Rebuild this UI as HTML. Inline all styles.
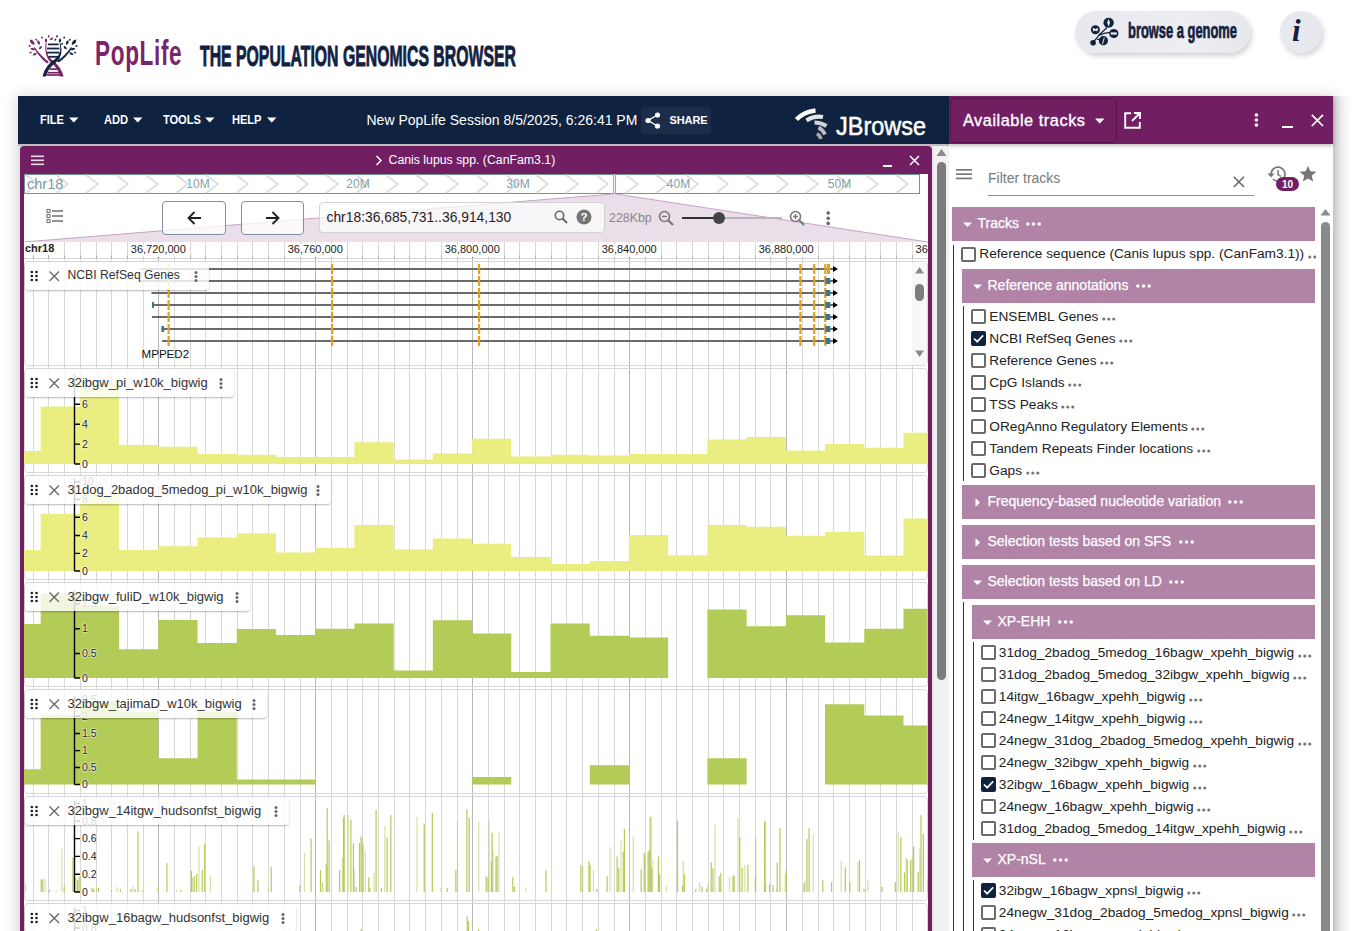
<!DOCTYPE html>
<html><head><meta charset="utf-8"><title>PopLife</title><style>
*{box-sizing:border-box;margin:0;padding:0}
html,body{width:1352px;height:931px;overflow:hidden;background:#fff;font-family:"Liberation Sans",sans-serif;color:#222}
.a{position:absolute}
.t{position:absolute;white-space:nowrap;line-height:1}
svg{position:absolute;overflow:visible}
</style></head>
<body>
<svg class="a" style="left:0;top:0" width="100" height="90" viewBox="0 0 100 90">
<g fill="#762466"><path d="M-3.5 0 Q0 -3.2 3.5 0 Q0 3.2 -3.5 0Z" transform="translate(32.2 42.3) rotate(50)"/><path d="M-2.5 0 Q0 -2.6 2.5 0 Q0 2.6 -2.5 0Z" transform="translate(38.6 42.6) rotate(70)"/><path d="M-2.25 0 Q0 -2.4 2.25 0 Q0 2.4 -2.25 0Z" transform="translate(46 40.5) rotate(85)"/><path d="M-2.25 0 Q0 -2.2 2.25 0 Q0 2.2 -2.25 0Z" transform="translate(51.6 38.8) rotate(-35)"/><path d="M-2.5 0 Q0 -2.4 2.5 0 Q0 2.4 -2.5 0Z" transform="translate(32.7 49) rotate(15)"/><path d="M-2.5 0 Q0 -2.4 2.5 0 Q0 2.4 -2.5 0Z" transform="translate(34.8 54.2) rotate(-30)"/><path d="M-2.25 0 Q0 -2.2 2.25 0 Q0 2.2 -2.25 0Z" transform="translate(40.4 47.8) rotate(-50)"/><path d="M-1.3 0 Q0 -1.8 1.3 0 Q0 1.8 -1.3 0Z" transform="translate(42 37.7) rotate(60)"/><path d="M-1.3 0 Q0 -1.8 1.3 0 Q0 1.8 -1.3 0Z" transform="translate(48.7 36.4) rotate(80)"/><path d="M-1.3 0 Q0 -1.8 1.3 0 Q0 1.8 -1.3 0Z" transform="translate(36.3 39.7) rotate(40)"/><path d="M-1.4 0 Q0 -1.8 1.4 0 Q0 1.8 -1.4 0Z" transform="translate(30.6 52.6) rotate(-20)"/><path d="M-1.4 0 Q0 -1.8 1.4 0 Q0 1.8 -1.4 0Z" transform="translate(29.6 45.9) rotate(20)"/>
<path d="M34.5 47 Q41 56 49 62 L47 63.5 Q39 57 34 48Z"/>
<path d="M46.5 43 Q45 55 52 60 Q61 66 63.5 76.5 L60 76.5 Q58 68 50.5 62 Q44 56 45.5 43Z"/>
</g>
<g fill="#142443"><path d="M-3.5 0 Q0 -3.2 3.5 0 Q0 3.2 -3.5 0Z" transform="translate(74 42.3) rotate(-50)"/><path d="M-2.5 0 Q0 -2.6 2.5 0 Q0 2.6 -2.5 0Z" transform="translate(67.3 42.6) rotate(-70)"/><path d="M-2.25 0 Q0 -2.4 2.25 0 Q0 2.4 -2.25 0Z" transform="translate(60 40.5) rotate(-85)"/><path d="M-2.5 0 Q0 -2.4 2.5 0 Q0 2.4 -2.5 0Z" transform="translate(73 49) rotate(-15)"/><path d="M-2.25 0 Q0 -2.2 2.25 0 Q0 2.2 -2.25 0Z" transform="translate(65.2 47.8) rotate(50)"/><path d="M-2.5 0 Q0 -2.4 2.5 0 Q0 2.4 -2.5 0Z" transform="translate(71.4 53.7) rotate(30)"/><path d="M-1.3 0 Q0 -1.8 1.3 0 Q0 1.8 -1.3 0Z" transform="translate(57 36.4) rotate(-80)"/><path d="M-1.3 0 Q0 -1.8 1.3 0 Q0 1.8 -1.3 0Z" transform="translate(64.2 37.7) rotate(-60)"/><path d="M-1.3 0 Q0 -1.8 1.3 0 Q0 1.8 -1.3 0Z" transform="translate(62.1 43.9) rotate(-60)"/><path d="M-1.3 0 Q0 -1.8 1.3 0 Q0 1.8 -1.3 0Z" transform="translate(69.8 39.7) rotate(-40)"/><path d="M-1.3 0 Q0 -1.8 1.3 0 Q0 1.8 -1.3 0Z" transform="translate(55.4 39.7) rotate(-70)"/><path d="M-1.4 0 Q0 -1.8 1.4 0 Q0 1.8 -1.4 0Z" transform="translate(75 52.6) rotate(20)"/><path d="M-1.4 0 Q0 -1.8 1.4 0 Q0 1.8 -1.4 0Z" transform="translate(76.5 45.9) rotate(-20)"/>
<path d="M71 47 Q65 56 57 61 L58.5 62.5 Q67 57 72 48Z"/>
<path d="M59.5 43 Q62.5 53 55 59 Q45 65 42.5 76.5 L46 76.5 Q48 68 56 62.5 Q64 56 60.5 43Z"/>
</g>
<g stroke="#142443" stroke-width="1.8">
<line x1="48" y1="44.4" x2="58.5" y2="44.4"/><line x1="47" y1="48.5" x2="59.5" y2="48.5"/><line x1="47" y1="52.6" x2="59.5" y2="52.6"/><line x1="48.5" y1="56.8" x2="58" y2="56.8"/>
</g>
<g stroke="#762466" stroke-width="1.7">
<line x1="49.5" y1="69.1" x2="58.5" y2="69.1"/><line x1="47.5" y1="72.7" x2="60" y2="72.7"/><line x1="46.5" y1="75" x2="61" y2="75"/>
</g>
</svg>
<div class="t" style="left:95px;top:35px;font-size:35px;font-weight:700;color:#7a246b;letter-spacing:1px;transform:scaleX(0.645);transform-origin:0 0">PopLife</div>
<div class="t" style="left:200px;top:42px;font-size:29px;font-weight:700;color:#13213f;-webkit-text-stroke:0.9px #13213f;transform:scaleX(0.5452);transform-origin:0 0">THE POPULATION GENOMICS BROWSER</div>
<div class="a" style="left:1075px;top:11px;width:175px;height:42px;border-radius:21px;background:linear-gradient(90deg,#e8e9ee,#eceef2 60%,#e6e8ec);box-shadow:2px 3px 5px rgba(0,0,0,0.18)"></div>
<svg style="left:1085px;top:14px" width="40" height="36" viewBox="0 0 40 36">
<path d="M8.5 28 Q14 20 22 13.5 M14 21.5 Q22 17 28.5 19.5 M12 25.5 Q15 24.5 18 26" stroke="#13213f" stroke-width="1.3" fill="none"/>
<g fill="#13213f"><circle cx="10.4" cy="15.7" r="4.5"/><ellipse cx="23.6" cy="8.7" rx="5.2" ry="5"/><circle cx="28.8" cy="19.5" r="4.6"/><circle cx="18.4" cy="26.7" r="4.6"/><circle cx="8.1" cy="28.8" r="2.8"/></g>
<g fill="#eef0f3"><path d="M23.6 4.8 L25 8.7 L23.6 12.6 L22.2 8.7Z"/><path d="M7.8 13.8 L10.4 15 L13 13.8 L12.5 17.6 L10.4 16.6 L8.3 17.6Z"/><rect x="25.8" y="18.4" width="6" height="2.2"/><path d="M18.8 23.4 L19.8 23.4 L18 30 L17 30Z"/></g>
</svg>
<div class="t" style="left:1128px;top:21px;font-size:21.5px;font-weight:700;color:#13213f;-webkit-text-stroke:0.7px #13213f;transform:scaleX(0.6);transform-origin:0 0">browse a genome</div>
<div class="a" style="left:1280px;top:11px;width:42px;height:42px;border-radius:21px;background:#e8e9ee;box-shadow:2px 3px 5px rgba(0,0,0,0.16)"></div>
<div class="t" style="left:1292px;top:15px;font-size:31px;font-weight:700;font-style:italic;font-family:'Liberation Serif',serif;color:#13213f">i</div>
<div class="a" style="left:18px;top:96px;width:1315px;height:900px;background:#e4e4e4;box-shadow:0 1px 14px 1px rgba(0,0,0,0.16)"></div>
<div class="a" style="left:18px;top:96px;width:931px;height:48px;background:#0f223f"></div>
<div class="a" style="left:18px;top:144px;width:931px;height:2px;background:#bfbfbf"></div>
<div class="t" style="left:40px;top:114px;font-size:12px;font-weight:700;color:#fff;letter-spacing:-0.1px;transform:scaleX(0.93);transform-origin:0 0">FILE</div>
<svg style="left:69px;top:117px" width="10" height="6"><path d="M0 0.5 L9.5 0.5 L4.75 5.5Z" fill="#fff"/></svg>
<div class="t" style="left:104px;top:114px;font-size:12px;font-weight:700;color:#fff;letter-spacing:-0.1px;transform:scaleX(0.93);transform-origin:0 0">ADD</div>
<svg style="left:133px;top:117px" width="10" height="6"><path d="M0 0.5 L9.5 0.5 L4.75 5.5Z" fill="#fff"/></svg>
<div class="t" style="left:163px;top:114px;font-size:12px;font-weight:700;color:#fff;letter-spacing:-0.1px;transform:scaleX(0.93);transform-origin:0 0">TOOLS</div>
<svg style="left:205px;top:117px" width="10" height="6"><path d="M0 0.5 L9.5 0.5 L4.75 5.5Z" fill="#fff"/></svg>
<div class="t" style="left:231.6px;top:114px;font-size:12px;font-weight:700;color:#fff;letter-spacing:-0.1px;transform:scaleX(0.93);transform-origin:0 0">HELP</div>
<svg style="left:267px;top:117px" width="10" height="6"><path d="M0 0.5 L9.5 0.5 L4.75 5.5Z" fill="#fff"/></svg>
<div class="t" style="left:366.5px;top:113px;font-size:14px;color:#fff">New PopLife Session 8/5/2025, 6:26:41 PM</div>
<div class="a" style="left:641px;top:107px;width:70px;height:27px;border-radius:4px;background:#1b2d49"></div>
<svg style="left:645px;top:112px" width="16" height="17" viewBox="0 0 16 17"><g fill="#fff"><circle cx="12.5" cy="3" r="2.6"/><circle cx="3" cy="8.5" r="2.6"/><circle cx="12.5" cy="14" r="2.6"/></g><path d="M12.5 3 L3 8.5 L12.5 14" stroke="#fff" stroke-width="1.4" fill="none"/></svg>
<div class="t" style="left:669.5px;top:115px;font-size:11px;font-weight:700;color:#fff;letter-spacing:-0.1px">SHARE</div>
<svg style="left:790px;top:104px" width="40" height="40" viewBox="0 0 40 40">
<path d="M6.5 15.5 Q13 8 25.5 6.5" stroke="#fff" stroke-width="4.4" fill="none"/>
<path d="M16.5 16.5 Q24 11.5 33 13" stroke="#e4e4e4" stroke-width="4.2" fill="none"/>
<path d="M24.5 18.5 Q31 18.5 36.5 22" stroke="#d2d2d2" stroke-width="4" fill="none"/>
<path d="M28.5 23.5 Q33 26 35 30.5" stroke="#bdbdbd" stroke-width="3.8" fill="none"/>
<path d="M27 29.5 Q30 31.5 31 35" stroke="#a9a9a9" stroke-width="3.6" fill="none"/>
</svg>
<div class="t" style="left:835.5px;top:114px;font-size:25.5px;color:#fff;font-family:'Liberation Sans',sans-serif;letter-spacing:0px;-webkit-text-stroke:0.5px #fff;transform:scaleX(0.92);transform-origin:0 0">JBrowse</div>
<div class="a" style="left:20px;top:146px;width:912px;height:800px;background:#721e63;border-radius:4px 4px 0 0"></div>
<div class="a" style="left:24px;top:174px;width:904px;height:760px;background:#fff"></div>
<svg style="left:31px;top:155px" width="14" height="11"><g fill="#e9dbe6"><rect x="0" y="0.5" width="13" height="1.6"/><rect x="0" y="4.5" width="13" height="1.6"/><rect x="0" y="8.5" width="13" height="1.6"/></g></svg>
<svg style="left:375px;top:155px" width="8" height="11"><path d="M1.5 1 L6 5.5 L1.5 10" stroke="#fff" stroke-width="1.5" fill="none"/></svg>
<div class="t" style="left:388.5px;top:154px;font-size:12.3px;color:#fff">Canis lupus spp. (CanFam3.1)</div>
<div class="a" style="left:883px;top:165px;width:9px;height:2px;background:#fff"></div>
<svg style="left:909px;top:155px" width="11" height="11"><path d="M1 1 L10 10 M10 1 L1 10" stroke="#fff" stroke-width="1.5"/></svg>
<div class="a" style="left:24px;top:174px;width:896px;height:20px;border:1px solid #6f9595;background:#fff"></div>
<svg style="left:0;top:0" width="1352" height="200"><path d="M26 175 L38 184 L26 193 M56 175 L68 184 L56 193 M86 175 L98 184 L86 193 M116 175 L128 184 L116 193 M146 175 L158 184 L146 193 M176 175 L188 184 L176 193 M206 175 L218 184 L206 193 M236 175 L248 184 L236 193 M266 175 L278 184 L266 193 M296 175 L308 184 L296 193 M326 175 L338 184 L326 193 M356 175 L368 184 L356 193 M386 175 L398 184 L386 193 M416 175 L428 184 L416 193 M446 175 L458 184 L446 193 M476 175 L488 184 L476 193 M506 175 L518 184 L506 193 M536 175 L548 184 L536 193 M566 175 L578 184 L566 193 M596 175 L608 184 L596 193 M626 175 L638 184 L626 193 M656 175 L668 184 L656 193 M686 175 L698 184 L686 193 M716 175 L728 184 L716 193 M746 175 L758 184 L746 193 M776 175 L788 184 L776 193 M806 175 L818 184 L806 193 M836 175 L848 184 L836 193 M866 175 L878 184 L866 193 M896 175 L908 184 L896 193" stroke="#dcdcdc" stroke-width="1.6" fill="none"/></svg>
<div class="t" style="left:27px;top:177px;font-size:14.5px;color:#7a9a9e">chr18</div>
<div class="t" style="left:186px;top:177.5px;font-size:12px;color:#86a0a3;width:24px;text-align:center">10M</div>
<div class="t" style="left:346px;top:177.5px;font-size:12px;color:#86a0a3;width:24px;text-align:center">20M</div>
<div class="t" style="left:506px;top:177.5px;font-size:12px;color:#86a0a3;width:24px;text-align:center">30M</div>
<div class="t" style="left:666.5px;top:177.5px;font-size:12px;color:#86a0a3;width:24px;text-align:center">40M</div>
<div class="t" style="left:827.5px;top:177.5px;font-size:12px;color:#86a0a3;width:24px;text-align:center">50M</div>
<div class="a" style="left:613px;top:174px;width:3px;height:20px;border:1px solid #c69ac0;background:#f3eaf2"></div>
<svg style="left:0;top:0" width="1352" height="260"><path d="M24 242 L613 194 L616 194 L928 242 Z" fill="#eadfe9"/><path d="M24 242 L613 194 M616 194 L928 242" stroke="#c9a2c3" stroke-width="1"/></svg>
<svg style="left:46px;top:208px" width="18" height="16"><g fill="none" stroke="#777" stroke-width="1.1"><rect x="1" y="1.5" width="3" height="3"/><rect x="1" y="6.5" width="3" height="3"/><rect x="1" y="11.5" width="3" height="3"/></g><g fill="#777"><rect x="6" y="2.2" width="11" height="1.6"/><rect x="6" y="7.2" width="11" height="1.6"/><rect x="6" y="12.2" width="11" height="1.6"/></g></svg>
<div class="a" style="left:162px;top:201px;width:63.5px;height:33.5px;border:1px solid #7f8ea3;border-radius:4px;background:rgba(255,255,255,0.78)"></div>
<div class="a" style="left:240.5px;top:201px;width:63.5px;height:33.5px;border:1px solid #7f8ea3;border-radius:4px;background:rgba(255,255,255,0.78)"></div>
<svg style="left:187px;top:211px" width="15" height="15"><path d="M14 7 L1.5 7 M7.5 1 L1.5 7 L7.5 13" stroke="#222" stroke-width="1.9" fill="none"/></svg>
<svg style="left:265px;top:211px" width="15" height="15"><path d="M1 7 L13.5 7 M7.5 1 L13.5 7 L7.5 13" stroke="#222" stroke-width="1.9" fill="none"/></svg>
<div class="a" style="left:318.5px;top:201.5px;width:286px;height:31px;border:1px solid #d2d2d2;border-radius:4px;background:rgba(255,255,255,0.7)"></div>
<div class="t" style="left:326.5px;top:211px;font-size:13.85px;color:#222">chr18:36,685,731..36,914,130</div>
<svg style="left:554px;top:210px" width="14" height="14"><circle cx="5.5" cy="5.5" r="4.2" stroke="#666" stroke-width="1.6" fill="none"/><path d="M8.5 8.5 L13 13" stroke="#666" stroke-width="2"/></svg>
<svg style="left:576px;top:209px" width="16" height="16"><circle cx="8" cy="8" r="7.5" fill="#757575"/><text x="8" y="12.3" font-size="11.5" font-weight="700" fill="#fff" text-anchor="middle" font-family="Liberation Sans">?</text></svg>
<div class="t" style="left:609px;top:212px;font-size:12.4px;color:#8c8389">228Kbp</div>
<svg style="left:658px;top:210px" width="17" height="16"><circle cx="6.5" cy="6.5" r="5" stroke="#777" stroke-width="1.6" fill="none"/><path d="M4 6.5 L9 6.5" stroke="#777" stroke-width="1.4"/><path d="M10 10 L15 15" stroke="#777" stroke-width="2.2"/></svg>
<div class="a" style="left:682px;top:217px;width:100px;height:2px;background:#bdb3bb"></div>
<div class="a" style="left:682px;top:216.5px;width:37px;height:2.5px;background:#333"></div>
<div class="a" style="left:712.5px;top:211.5px;width:12.5px;height:12.5px;border-radius:50%;background:#444"></div>
<svg style="left:789px;top:210px" width="17" height="16"><circle cx="6.5" cy="6.5" r="5" stroke="#777" stroke-width="1.6" fill="none"/><path d="M4 6.5 L9 6.5 M6.5 4 L6.5 9" stroke="#777" stroke-width="1.4"/><path d="M10 10 L15 15" stroke="#777" stroke-width="2.2"/></svg>
<svg style="left:826px;top:211px" width="5" height="15"><g fill="#666"><circle cx="2.2" cy="2" r="1.8"/><circle cx="2.2" cy="7.2" r="1.8"/><circle cx="2.2" cy="12.4" r="1.8"/></g></svg>
<svg style="left:0;top:0" width="1352" height="931"><path d="M33.5 242 L33.5 931 M48.5 242 L48.5 931 M64.5 242 L64.5 931 M80.5 242 L80.5 931 M96.5 242 L96.5 931 M111.5 242 L111.5 931 M127.5 242 L127.5 931 M143.5 242 L143.5 931 M158.5 242 L158.5 931 M174.5 242 L174.5 931 M190.5 242 L190.5 931 M205.5 242 L205.5 931 M221.5 242 L221.5 931 M237.5 242 L237.5 931 M252.5 242 L252.5 931 M268.5 242 L268.5 931 M284.5 242 L284.5 931 M300.5 242 L300.5 931 M315.5 242 L315.5 931 M331.5 242 L331.5 931 M347.5 242 L347.5 931 M362.5 242 L362.5 931 M378.5 242 L378.5 931 M394.5 242 L394.5 931 M409.5 242 L409.5 931 M425.5 242 L425.5 931 M441.5 242 L441.5 931 M457.5 242 L457.5 931 M472.5 242 L472.5 931 M488.5 242 L488.5 931 M504.5 242 L504.5 931 M519.5 242 L519.5 931 M535.5 242 L535.5 931 M551.5 242 L551.5 931 M566.5 242 L566.5 931 M582.5 242 L582.5 931 M598.5 242 L598.5 931 M614.5 242 L614.5 931 M629.5 242 L629.5 931 M645.5 242 L645.5 931 M661.5 242 L661.5 931 M676.5 242 L676.5 931 M692.5 242 L692.5 931 M708.5 242 L708.5 931 M723.5 242 L723.5 931 M739.5 242 L739.5 931 M755.5 242 L755.5 931 M770.5 242 L770.5 931 M786.5 242 L786.5 931 M802.5 242 L802.5 931 M818.5 242 L818.5 931 M833.5 242 L833.5 931 M849.5 242 L849.5 931 M865.5 242 L865.5 931 M880.5 242 L880.5 931 M896.5 242 L896.5 931 M912.5 242 L912.5 931" stroke="#d8d8d8" stroke-width="1"/>
<path d="M158.5 258 L158.5 931 M315.5 258 L315.5 931 M472.5 258 L472.5 931 M629.5 258 L629.5 931 M786.5 258 L786.5 931" stroke="#b8b8b8" stroke-width="1"/></svg>
<div class="a" style="left:24px;top:258px;width:904px;height:1px;background:#d5d5d5"></div>
<svg style="left:0;top:0" width="1352" height="300"><path d="M33.5 255.5 L33.5 258 M48.5 255.5 L48.5 258 M64.5 255.5 L64.5 258 M80.5 255.5 L80.5 258 M96.5 255.5 L96.5 258 M111.5 255.5 L111.5 258 M127.5 255.5 L127.5 258 M143.5 255.5 L143.5 258 M158.5 255.5 L158.5 258 M174.5 255.5 L174.5 258 M190.5 255.5 L190.5 258 M205.5 255.5 L205.5 258 M221.5 255.5 L221.5 258 M237.5 255.5 L237.5 258 M252.5 255.5 L252.5 258 M268.5 255.5 L268.5 258 M284.5 255.5 L284.5 258 M300.5 255.5 L300.5 258 M315.5 255.5 L315.5 258 M331.5 255.5 L331.5 258 M347.5 255.5 L347.5 258 M362.5 255.5 L362.5 258 M378.5 255.5 L378.5 258 M394.5 255.5 L394.5 258 M409.5 255.5 L409.5 258 M425.5 255.5 L425.5 258 M441.5 255.5 L441.5 258 M457.5 255.5 L457.5 258 M472.5 255.5 L472.5 258 M488.5 255.5 L488.5 258 M504.5 255.5 L504.5 258 M519.5 255.5 L519.5 258 M535.5 255.5 L535.5 258 M551.5 255.5 L551.5 258 M566.5 255.5 L566.5 258 M582.5 255.5 L582.5 258 M598.5 255.5 L598.5 258 M614.5 255.5 L614.5 258 M629.5 255.5 L629.5 258 M645.5 255.5 L645.5 258 M661.5 255.5 L661.5 258 M676.5 255.5 L676.5 258 M692.5 255.5 L692.5 258 M708.5 255.5 L708.5 258 M723.5 255.5 L723.5 258 M739.5 255.5 L739.5 258 M755.5 255.5 L755.5 258 M770.5 255.5 L770.5 258 M786.5 255.5 L786.5 258 M802.5 255.5 L802.5 258 M818.5 255.5 L818.5 258 M833.5 255.5 L833.5 258 M849.5 255.5 L849.5 258 M865.5 255.5 L865.5 258 M880.5 255.5 L880.5 258 M896.5 255.5 L896.5 258 M912.5 255.5 L912.5 258" stroke="#aaa" stroke-width="1"/>
<path d="M158.5 254 L158.5 258 M315.5 254 L315.5 258 M472.5 254 L472.5 258 M629.5 254 L629.5 258 M786.5 254 L786.5 258" stroke="#555" stroke-width="1"/></svg>
<div class="t" style="left:24px;top:242px;font-size:11px;font-weight:700;color:#222;background:#fff;padding:1px 1px">chr18</div>
<div class="t" style="left:128.3px;top:243.5px;width:60px;text-align:center;font-size:11px;color:#222;background:#fff;padding:0 0 2px">36,720,000</div>
<div class="t" style="left:285.27px;top:243.5px;width:60px;text-align:center;font-size:11px;color:#222;background:#fff;padding:0 0 2px">36,760,000</div>
<div class="t" style="left:442.24px;top:243.5px;width:60px;text-align:center;font-size:11px;color:#222;background:#fff;padding:0 0 2px">36,800,000</div>
<div class="t" style="left:599.21px;top:243.5px;width:60px;text-align:center;font-size:11px;color:#222;background:#fff;padding:0 0 2px">36,840,000</div>
<div class="t" style="left:756.1800000000001px;top:243.5px;width:60px;text-align:center;font-size:11px;color:#222;background:#fff;padding:0 0 2px">36,880,000</div>
<div class="t" style="left:913.1500000000001px;top:243.5px;width:60px;text-align:center;font-size:11px;color:#222;background:#fff;padding:0 0 2px">36,920,000</div>
<div class="a" style="left:928px;top:240px;width:4px;height:30px;background:#721e63"></div>
<div class="a" style="left:24px;top:261px;width:904px;height:105px;border:1px solid #d8d8d8;border-radius:4px"></div>
<div class="a" style="left:24px;top:368px;width:904px;height:105px;border:1px solid #d8d8d8;border-radius:4px"></div>
<div class="a" style="left:24px;top:475px;width:904px;height:105px;border:1px solid #d8d8d8;border-radius:4px"></div>
<div class="a" style="left:24px;top:582px;width:904px;height:105px;border:1px solid #d8d8d8;border-radius:4px"></div>
<div class="a" style="left:24px;top:689px;width:904px;height:105px;border:1px solid #d8d8d8;border-radius:4px"></div>
<div class="a" style="left:24px;top:796px;width:904px;height:105px;border:1px solid #d8d8d8;border-radius:4px"></div>
<div class="a" style="left:24px;top:903px;width:904px;height:105px;border:1px solid #d8d8d8;border-radius:4px"></div>
<div class="a" style="left:24px;top:1010px;width:904px;height:105px;border:1px solid #d8d8d8;border-radius:4px"></div>
<svg style="left:0;top:0" width="1352" height="400"><path d="M140 269 L833 269 M140 281 L833 281 M151.5 293 L833 293 M152 305 L833 305 M152 317 L833 317 M161.5 329 L833 329 M162 341 L833 341" stroke="#6a6a6a" stroke-width="2"/>
<rect x="167.5" y="264" width="2.2" height="10" fill="#e1a31f"/><rect x="331" y="264" width="2.2" height="10" fill="#e1a31f"/><rect x="478" y="264" width="2.2" height="10" fill="#e1a31f"/><rect x="799.3" y="264" width="2.2" height="10" fill="#e1a31f"/><rect x="813.1" y="264" width="2.2" height="10" fill="#e1a31f"/><rect x="824.2" y="264" width="2.2" height="10" fill="#e1a31f"/><rect x="827" y="264" width="3" height="10" fill="#e1a31f"/><rect x="167.5" y="276" width="2.2" height="10" fill="#e1a31f"/><rect x="331" y="276" width="2.2" height="10" fill="#e1a31f"/><rect x="478" y="276" width="2.2" height="10" fill="#e1a31f"/><rect x="799.3" y="276" width="2.2" height="10" fill="#e1a31f"/><rect x="813.1" y="276" width="2.2" height="10" fill="#e1a31f"/><rect x="824.2" y="276" width="2.2" height="10" fill="#e1a31f"/><rect x="167.5" y="288" width="2.2" height="10" fill="#e1a31f"/><rect x="331" y="288" width="2.2" height="10" fill="#e1a31f"/><rect x="478" y="288" width="2.2" height="10" fill="#e1a31f"/><rect x="799.3" y="288" width="2.2" height="10" fill="#e1a31f"/><rect x="813.1" y="288" width="2.2" height="10" fill="#e1a31f"/><rect x="824.2" y="288" width="2.2" height="10" fill="#e1a31f"/><rect x="167.5" y="300" width="2.2" height="10" fill="#e1a31f"/><rect x="331" y="300" width="2.2" height="10" fill="#e1a31f"/><rect x="478" y="300" width="2.2" height="10" fill="#e1a31f"/><rect x="799.3" y="300" width="2.2" height="10" fill="#e1a31f"/><rect x="813.1" y="300" width="2.2" height="10" fill="#e1a31f"/><rect x="824.2" y="300" width="2.2" height="10" fill="#e1a31f"/><rect x="167.5" y="312" width="2.2" height="10" fill="#e1a31f"/><rect x="331" y="312" width="2.2" height="10" fill="#e1a31f"/><rect x="478" y="312" width="2.2" height="10" fill="#e1a31f"/><rect x="799.3" y="312" width="2.2" height="10" fill="#e1a31f"/><rect x="813.1" y="312" width="2.2" height="10" fill="#e1a31f"/><rect x="824.2" y="312" width="2.2" height="10" fill="#e1a31f"/><rect x="167.5" y="324" width="2.2" height="10" fill="#e1a31f"/><rect x="331" y="324" width="2.2" height="10" fill="#e1a31f"/><rect x="478" y="324" width="2.2" height="10" fill="#e1a31f"/><rect x="799.3" y="324" width="2.2" height="10" fill="#e1a31f"/><rect x="813.1" y="324" width="2.2" height="10" fill="#e1a31f"/><rect x="824.2" y="324" width="2.2" height="10" fill="#e1a31f"/><rect x="167.5" y="336" width="2.2" height="10" fill="#e1a31f"/><rect x="331" y="336" width="2.2" height="10" fill="#e1a31f"/><rect x="478" y="336" width="2.2" height="10" fill="#e1a31f"/><rect x="799.3" y="336" width="2.2" height="10" fill="#e1a31f"/><rect x="813.1" y="336" width="2.2" height="10" fill="#e1a31f"/><rect x="824.2" y="336" width="2.2" height="10" fill="#e1a31f"/>
<rect x="825.5" y="278" width="4.8" height="6" fill="#38778f"/><rect x="825.5" y="290" width="4.8" height="6" fill="#38778f"/><rect x="825.5" y="302" width="4.8" height="6" fill="#38778f"/><rect x="825.5" y="314" width="4.8" height="6" fill="#38778f"/><rect x="825.5" y="326" width="4.8" height="6" fill="#38778f"/><rect x="825.5" y="338" width="4.8" height="6" fill="#38778f"/><rect x="152" y="302" width="2" height="6" fill="#38778f"/><rect x="161.5" y="326" width="2.5" height="6" fill="#38778f"/>
<path d="M833 266 L838 269 L833 272 Z M833 278 L838 281 L833 284 Z M833 290 L838 293 L833 296 Z M833 302 L838 305 L833 308 Z M833 314 L838 317 L833 320 Z M833 326 L838 329 L833 332 Z M833 338 L838 341 L833 344 Z" fill="#000"/></svg>
<div class="t" style="left:141.5px;top:347.5px;font-size:11.6px;color:#111">MPPED2</div>
<div class="a" style="left:912px;top:262.5px;width:15px;height:102px;background:#f8f8f8"></div>
<svg style="left:914px;top:266px" width="11" height="92"><path d="M1 7.5 L5.5 1 L10 7.5Z" fill="#8a8a8a"/><rect x="1" y="18" width="9" height="17" rx="4.5" fill="#7d7d7d"/><path d="M1 84.5 L5.5 91 L10 84.5Z" fill="#8a8a8a"/></svg>
<svg style="left:0;top:0" width="1352" height="931"><path fill="#eaee80" d="M24.00 464 L24.00 451.1 L40.66 451.1 L40.66 464 M40.66 464 L40.66 406.5 L79.88 406.5 L79.88 464 M79.88 464 L79.88 383.0 L119.10 383.0 L119.10 464 M119.10 464 L119.10 445.0 L158.32 445.0 L158.32 464 M158.32 464 L158.32 446.7 L197.54 446.7 L197.54 464 M197.54 464 L197.54 454.1 L236.76 454.1 L236.76 464 M236.76 464 L236.76 454.8 L275.98 454.8 L275.98 464 M275.98 464 L275.98 456.9 L315.20 456.9 L315.20 464 M315.20 464 L315.20 456.9 L354.42 456.9 L354.42 464 M354.42 464 L354.42 442.2 L393.64 442.2 L393.64 464 M393.64 464 L393.64 459.6 L432.86 459.6 L432.86 464 M432.86 464 L432.86 453.5 L472.08 453.5 L472.08 464 M472.08 464 L472.08 438.8 L511.30 438.8 L511.30 464 M511.30 464 L511.30 456.5 L550.52 456.5 L550.52 464 M550.52 464 L550.52 454.8 L589.74 454.8 L589.74 464 M589.74 464 L589.74 455.5 L628.96 455.5 L628.96 464 M628.96 464 L628.96 454.0 L668.18 454.0 L668.18 464 M668.18 464 L668.18 454.0 L707.40 454.0 L707.40 464 M707.40 464 L707.40 439.5 L746.62 439.5 L746.62 464 M746.62 464 L746.62 437.0 L785.84 437.0 L785.84 464 M785.84 464 L785.84 450.5 L825.06 450.5 L825.06 464 M825.06 464 L825.06 444.1 L864.28 444.1 L864.28 464 M864.28 464 L864.28 447.7 L903.50 447.7 L903.50 464 M903.50 464 L903.50 432.8 L927.60 432.8 L927.60 464 Z"/></svg>
<svg style="left:0;top:0" width="1352" height="931"><path d="M74.5 374.5 L74.5 464 M74.5 384.4 L80 384.4 M74.5 404.3 L80 404.3 M74.5 424.3 L80 424.3 M74.5 444.1 L80 444.1 M74.5 464 L80 464" stroke="#000" stroke-width="1.4" fill="none"/></svg>
<div class="t" style="left:82px;top:378.9px;font-size:10.5px;color:#222;text-shadow:0 0 2px #fff,0 0 2px #fff,0 0 1px #fff">8</div>
<div class="t" style="left:82px;top:398.8px;font-size:10.5px;color:#222;text-shadow:0 0 2px #fff,0 0 2px #fff,0 0 1px #fff">6</div>
<div class="t" style="left:82px;top:418.8px;font-size:10.5px;color:#222;text-shadow:0 0 2px #fff,0 0 2px #fff,0 0 1px #fff">4</div>
<div class="t" style="left:82px;top:438.6px;font-size:10.5px;color:#222;text-shadow:0 0 2px #fff,0 0 2px #fff,0 0 1px #fff">2</div>
<div class="t" style="left:82px;top:458.5px;font-size:10.5px;color:#222;text-shadow:0 0 2px #fff,0 0 2px #fff,0 0 1px #fff">0</div>
<svg style="left:0;top:0" width="1352" height="931"><path fill="#eaee80" d="M24.00 571 L24.00 549.9 L40.66 549.9 L40.66 571 M40.66 571 L40.66 513.7 L79.88 513.7 L79.88 571 M79.88 571 L79.88 493.0 L119.10 493.0 L119.10 571 M119.10 571 L119.10 549.9 L158.32 549.9 L158.32 571 M158.32 571 L158.32 546.3 L197.54 546.3 L197.54 571 M197.54 571 L197.54 537.4 L236.76 537.4 L236.76 571 M236.76 571 L236.76 533.2 L275.98 533.2 L275.98 571 M275.98 571 L275.98 552.4 L315.20 552.4 L315.20 571 M315.20 571 L315.20 547.7 L354.42 547.7 L354.42 571 M354.42 571 L354.42 525.0 L393.64 525.0 L393.64 571 M393.64 571 L393.64 549.5 L432.86 549.5 L432.86 571 M432.86 571 L432.86 538.5 L472.08 538.5 L472.08 571 M472.08 571 L472.08 543.8 L511.30 543.8 L511.30 571 M511.30 571 L511.30 557.0 L550.52 557.0 L550.52 571 M550.52 571 L550.52 564.0 L589.74 564.0 L589.74 571 M589.74 571 L589.74 560.9 L628.96 560.9 L628.96 571 M628.96 571 L628.96 535.0 L668.18 535.0 L668.18 571 M668.18 571 L668.18 555.2 L707.40 555.2 L707.40 571 M707.40 571 L707.40 525.0 L746.62 525.0 L746.62 571 M746.62 571 L746.62 526.8 L785.84 526.8 L785.84 571 M785.84 571 L785.84 535.7 L825.06 535.7 L825.06 571 M825.06 571 L825.06 531.8 L864.28 531.8 L864.28 571 M864.28 571 L864.28 555.6 L903.50 555.6 L903.50 571 M903.50 571 L903.50 518.6 L927.60 518.6 L927.60 571 Z"/></svg>
<svg style="left:0;top:0" width="1352" height="931"><path d="M74.5 478.5 L74.5 571 M74.5 481.7 L80 481.7 M74.5 499.5 L80 499.5 M74.5 517.2 L80 517.2 M74.5 535.5 L80 535.5 M74.5 553.4 L80 553.4 M74.5 571 L80 571" stroke="#000" stroke-width="1.4" fill="none"/></svg>
<div class="t" style="left:82px;top:476.2px;font-size:10.5px;color:#222;text-shadow:0 0 2px #fff,0 0 2px #fff,0 0 1px #fff">10</div>
<div class="t" style="left:82px;top:494.0px;font-size:10.5px;color:#222;text-shadow:0 0 2px #fff,0 0 2px #fff,0 0 1px #fff">8</div>
<div class="t" style="left:82px;top:511.70000000000005px;font-size:10.5px;color:#222;text-shadow:0 0 2px #fff,0 0 2px #fff,0 0 1px #fff">6</div>
<div class="t" style="left:82px;top:530.0px;font-size:10.5px;color:#222;text-shadow:0 0 2px #fff,0 0 2px #fff,0 0 1px #fff">4</div>
<div class="t" style="left:82px;top:547.9px;font-size:10.5px;color:#222;text-shadow:0 0 2px #fff,0 0 2px #fff,0 0 1px #fff">2</div>
<div class="t" style="left:82px;top:565.5px;font-size:10.5px;color:#222;text-shadow:0 0 2px #fff,0 0 2px #fff,0 0 1px #fff">0</div>
<svg style="left:0;top:0" width="1352" height="931"><path fill="#b3cb57" d="M24.00 678 L24.00 623.9 L40.66 623.9 L40.66 678 M40.66 678 L40.66 594.0 L79.88 594.0 L79.88 678 M79.88 678 L79.88 606.0 L119.10 606.0 L119.10 678 M119.10 678 L119.10 649.2 L158.32 649.2 L158.32 678 M158.32 678 L158.32 619.9 L197.54 619.9 L197.54 678 M197.54 678 L197.54 643.0 L236.76 643.0 L236.76 678 M236.76 678 L236.76 629.0 L275.98 629.0 L275.98 678 M275.98 678 L275.98 635.0 L315.20 635.0 L315.20 678 M315.20 678 L315.20 628.7 L354.42 628.7 L354.42 678 M354.42 678 L354.42 623.4 L393.64 623.4 L393.64 678 M393.64 678 L393.64 670.6 L432.86 670.6 L432.86 678 M432.86 678 L432.86 620.2 L472.08 620.2 L472.08 678 M472.08 678 L472.08 633.6 L511.30 633.6 L511.30 678 M511.30 678 L511.30 672.0 L550.52 672.0 L550.52 678 M550.52 678 L550.52 623.4 L589.74 623.4 L589.74 678 M589.74 678 L589.74 635.8 L628.96 635.8 L628.96 678 M628.96 678 L628.96 637.6 L668.18 637.6 L668.18 678 M707.40 678 L707.40 609.5 L746.62 609.5 L746.62 678 M746.62 678 L746.62 626.2 L785.84 626.2 L785.84 678 M785.84 678 L785.84 615.2 L825.06 615.2 L825.06 678 M825.06 678 L825.06 642.5 L864.28 642.5 L864.28 678 M864.28 678 L864.28 628.7 L903.50 628.7 L903.50 678 M903.50 678 L903.50 608.8 L927.60 608.8 L927.60 678 Z"/></svg>
<svg style="left:0;top:0" width="1352" height="931"><path d="M74.5 590.5 L74.5 678 M74.5 603.8 L80 603.8 M74.5 628.7 L80 628.7 M74.5 653.5 L80 653.5 M74.5 678 L80 678" stroke="#000" stroke-width="1.4" fill="none"/></svg>
<div class="t" style="left:82px;top:598.3px;font-size:10.5px;color:#222;text-shadow:0 0 2px #fff,0 0 2px #fff,0 0 1px #fff">1.5</div>
<div class="t" style="left:82px;top:623.2px;font-size:10.5px;color:#222;text-shadow:0 0 2px #fff,0 0 2px #fff,0 0 1px #fff">1</div>
<div class="t" style="left:82px;top:648.0px;font-size:10.5px;color:#222;text-shadow:0 0 2px #fff,0 0 2px #fff,0 0 1px #fff">0.5</div>
<div class="t" style="left:82px;top:672.5px;font-size:10.5px;color:#222;text-shadow:0 0 2px #fff,0 0 2px #fff,0 0 1px #fff">0</div>
<svg style="left:0;top:0" width="1352" height="931"><path fill="#b3cb57" d="M24.00 784.5 L24.00 769.2 L40.66 769.2 L40.66 784.5 M40.66 784.5 L40.66 715.0 L79.88 715.0 L79.88 784.5 M79.88 784.5 L79.88 702.0 L119.10 702.0 L119.10 784.5 M119.10 784.5 L119.10 712.0 L158.32 712.0 L158.32 784.5 M158.32 784.5 L158.32 758.2 L197.54 758.2 L197.54 784.5 M197.54 784.5 L197.54 712.0 L236.76 712.0 L236.76 784.5 M236.76 784.5 L236.76 779.6 L275.98 779.6 L275.98 784.5 M275.98 784.5 L275.98 779.6 L315.20 779.6 L315.20 784.5 M472.08 784.5 L472.08 777.0 L511.30 777.0 L511.30 784.5 M589.74 784.5 L589.74 765.3 L628.96 765.3 L628.96 784.5 M707.40 784.5 L707.40 758.2 L746.62 758.2 L746.62 784.5 M825.06 784.5 L825.06 704.2 L864.28 704.2 L864.28 784.5 M864.28 784.5 L864.28 715.6 L903.50 715.6 L903.50 784.5 M903.50 784.5 L903.50 725.5 L927.60 725.5 L927.60 784.5 Z"/></svg>
<svg style="left:0;top:0" width="1352" height="931"><path d="M74.5 696 L74.5 784.5 M74.5 699 L80 699 M74.5 716 L80 716 M74.5 733.5 L80 733.5 M74.5 750.6 L80 750.6 M74.5 767.5 L80 767.5 M74.5 784.5 L80 784.5" stroke="#000" stroke-width="1.4" fill="none"/></svg>
<div class="t" style="left:82px;top:693.5px;font-size:10.5px;color:#222;text-shadow:0 0 2px #fff,0 0 2px #fff,0 0 1px #fff">2.5</div>
<div class="t" style="left:82px;top:710.5px;font-size:10.5px;color:#222;text-shadow:0 0 2px #fff,0 0 2px #fff,0 0 1px #fff">2</div>
<div class="t" style="left:82px;top:728.0px;font-size:10.5px;color:#222;text-shadow:0 0 2px #fff,0 0 2px #fff,0 0 1px #fff">1.5</div>
<div class="t" style="left:82px;top:745.1px;font-size:10.5px;color:#222;text-shadow:0 0 2px #fff,0 0 2px #fff,0 0 1px #fff">1</div>
<div class="t" style="left:82px;top:762.0px;font-size:10.5px;color:#222;text-shadow:0 0 2px #fff,0 0 2px #fff,0 0 1px #fff">0.5</div>
<div class="t" style="left:82px;top:779.0px;font-size:10.5px;color:#222;text-shadow:0 0 2px #fff,0 0 2px #fff,0 0 1px #fff">0</div>
<svg style="left:0;top:0" width="1352" height="931"><g fill="#b3cb57"><rect x="25.0" y="883.0" width="1.2" height="9.0" fill-opacity="0.55"/><rect x="40.6" y="879.4" width="1.2" height="12.6" fill-opacity="1.0"/><rect x="42.2" y="879.4" width="1.2" height="12.6" fill-opacity="1.0"/><rect x="44.5" y="878.7" width="1.2" height="13.3" fill-opacity="0.55"/><rect x="49.0" y="889.5" width="1.2" height="2.5" fill-opacity="1.0"/><rect x="55.5" y="891.0" width="1.2" height="1.0" fill-opacity="1.0"/><rect x="61.3" y="848.4" width="1.2" height="43.6" fill-opacity="0.55"/><rect x="63.6" y="886.7" width="1.2" height="5.3" fill-opacity="1.0"/><rect x="72.3" y="857.4" width="1.2" height="34.6" fill-opacity="1.0"/><rect x="75.5" y="878.0" width="1.2" height="14.0" fill-opacity="0.55"/><rect x="77.0" y="880.0" width="1.2" height="12.0" fill-opacity="1.0"/><rect x="78.5" y="877.0" width="1.2" height="15.0" fill-opacity="1.0"/><rect x="80.0" y="876.0" width="1.2" height="16.0" fill-opacity="0.55"/><rect x="91.5" y="888.0" width="1.2" height="4.0" fill-opacity="1.0"/><rect x="93.0" y="889.0" width="1.2" height="3.0" fill-opacity="1.0"/><rect x="96.0" y="887.0" width="1.2" height="5.0" fill-opacity="0.55"/><rect x="98.0" y="888.0" width="1.2" height="4.0" fill-opacity="1.0"/><rect x="111.0" y="890.0" width="1.2" height="2.0" fill-opacity="1.0"/><rect x="116.3" y="887.0" width="1.2" height="5.0" fill-opacity="0.55"/><rect x="119.7" y="889.0" width="1.2" height="3.0" fill-opacity="1.0"/><rect x="130.5" y="889.0" width="1.2" height="3.0" fill-opacity="1.0"/><rect x="132.5" y="886.0" width="1.2" height="6.0" fill-opacity="0.55"/><rect x="134.6" y="889.0" width="1.2" height="3.0" fill-opacity="1.0"/><rect x="137.4" y="831.2" width="1.2" height="60.8" fill-opacity="1.0"/><rect x="141.5" y="890.0" width="1.2" height="2.0" fill-opacity="0.55"/><rect x="157.6" y="888.0" width="1.2" height="4.0" fill-opacity="1.0"/><rect x="166.3" y="863.1" width="1.2" height="28.9" fill-opacity="1.0"/><rect x="176.0" y="890.0" width="1.2" height="2.0" fill-opacity="0.55"/><rect x="180.0" y="890.0" width="1.2" height="2.0" fill-opacity="1.0"/><rect x="190.8" y="870.7" width="1.2" height="21.3" fill-opacity="1.0"/><rect x="192.0" y="877.5" width="1.2" height="14.5" fill-opacity="0.55"/><rect x="193.6" y="876.4" width="1.2" height="15.6" fill-opacity="1.0"/><rect x="196.1" y="874.0" width="1.2" height="18.0" fill-opacity="1.0"/><rect x="198.4" y="846.1" width="1.2" height="45.9" fill-opacity="0.55"/><rect x="201.6" y="870.0" width="1.2" height="22.0" fill-opacity="1.0"/><rect x="204.1" y="843.8" width="1.2" height="48.2" fill-opacity="1.0"/><rect x="209.9" y="875.7" width="1.2" height="16.3" fill-opacity="0.55"/><rect x="253.4" y="866.1" width="1.2" height="25.9" fill-opacity="1.0"/><rect x="257.3" y="880.0" width="1.2" height="12.0" fill-opacity="1.0"/><rect x="267.6" y="887.0" width="1.2" height="5.0" fill-opacity="0.55"/><rect x="270.6" y="866.8" width="1.2" height="25.2" fill-opacity="1.0"/><rect x="299.3" y="885.0" width="1.2" height="7.0" fill-opacity="1.0"/><rect x="303.9" y="853.0" width="1.2" height="39.0" fill-opacity="0.55"/><rect x="310.5" y="838.6" width="1.2" height="53.4" fill-opacity="1.0"/><rect x="319.9" y="870.2" width="1.2" height="21.8" fill-opacity="1.0"/><rect x="322.2" y="882.0" width="1.2" height="10.0" fill-opacity="0.55"/><rect x="325.7" y="864.0" width="1.2" height="28.0" fill-opacity="1.0"/><rect x="326.6" y="808.0" width="1.2" height="84.0" fill-opacity="1.0"/><rect x="321.8" y="883.0" width="1.2" height="9.0" fill-opacity="0.55"/><rect x="328.5" y="840.4" width="1.2" height="51.6" fill-opacity="1.0"/><rect x="339.0" y="870.0" width="1.2" height="22.0" fill-opacity="1.0"/><rect x="341.8" y="858.0" width="1.2" height="34.0" fill-opacity="0.55"/><rect x="342.9" y="818.0" width="1.2" height="74.0" fill-opacity="1.0"/><rect x="343.6" y="815.0" width="1.2" height="77.0" fill-opacity="1.0"/><rect x="347.5" y="815.0" width="1.2" height="77.0" fill-opacity="0.55"/><rect x="350.3" y="819.5" width="1.2" height="72.5" fill-opacity="1.0"/><rect x="352.8" y="843.6" width="1.2" height="48.4" fill-opacity="1.0"/><rect x="353.7" y="870.2" width="1.2" height="21.8" fill-opacity="0.55"/><rect x="355.5" y="887.0" width="1.2" height="5.0" fill-opacity="1.0"/><rect x="359.0" y="843.0" width="1.2" height="49.0" fill-opacity="1.0"/><rect x="360.1" y="835.8" width="1.2" height="56.2" fill-opacity="0.55"/><rect x="361.3" y="837.4" width="1.2" height="54.6" fill-opacity="1.0"/><rect x="362.4" y="844.3" width="1.2" height="47.7" fill-opacity="1.0"/><rect x="364.7" y="851.2" width="1.2" height="40.8" fill-opacity="0.55"/><rect x="368.2" y="877.0" width="1.2" height="15.0" fill-opacity="1.0"/><rect x="369.3" y="888.0" width="1.2" height="4.0" fill-opacity="1.0"/><rect x="373.4" y="872.5" width="1.2" height="19.5" fill-opacity="0.55"/><rect x="375.5" y="810.0" width="1.2" height="82.0" fill-opacity="1.0"/><rect x="380.8" y="888.0" width="1.2" height="4.0" fill-opacity="1.0"/><rect x="384.2" y="826.0" width="1.2" height="66.0" fill-opacity="0.55"/><rect x="386.5" y="837.4" width="1.2" height="54.6" fill-opacity="1.0"/><rect x="390.2" y="815.0" width="1.2" height="77.0" fill-opacity="1.0"/><rect x="416.3" y="816.8" width="1.2" height="75.2" fill-opacity="0.55"/><rect x="423.6" y="823.7" width="1.2" height="68.3" fill-opacity="1.0"/><rect x="431.7" y="812.9" width="1.2" height="79.1" fill-opacity="1.0"/><rect x="440.4" y="888.0" width="1.2" height="4.0" fill-opacity="0.55"/><rect x="446.6" y="888.0" width="1.2" height="4.0" fill-opacity="1.0"/><rect x="455.3" y="870.2" width="1.2" height="21.8" fill-opacity="1.0"/><rect x="456.9" y="821.4" width="1.2" height="70.6" fill-opacity="0.55"/><rect x="466.3" y="809.2" width="1.2" height="82.8" fill-opacity="1.0"/><rect x="468.6" y="818.0" width="1.2" height="74.0" fill-opacity="1.0"/><rect x="478.2" y="821.8" width="1.2" height="70.2" fill-opacity="0.55"/><rect x="485.6" y="876.4" width="1.2" height="15.6" fill-opacity="1.0"/><rect x="487.4" y="877.5" width="1.2" height="14.5" fill-opacity="1.0"/><rect x="488.5" y="821.4" width="1.2" height="70.6" fill-opacity="0.55"/><rect x="490.8" y="861.5" width="1.2" height="30.5" fill-opacity="1.0"/><rect x="491.5" y="832.8" width="1.2" height="59.2" fill-opacity="1.0"/><rect x="492.4" y="850.0" width="1.2" height="42.0" fill-opacity="0.55"/><rect x="495.4" y="857.0" width="1.2" height="35.0" fill-opacity="1.0"/><rect x="496.6" y="855.8" width="1.2" height="36.2" fill-opacity="1.0"/><rect x="498.4" y="831.7" width="1.2" height="60.3" fill-opacity="0.55"/><rect x="512.2" y="877.0" width="1.2" height="15.0" fill-opacity="1.0"/><rect x="513.8" y="886.7" width="1.2" height="5.3" fill-opacity="1.0"/><rect x="525.2" y="888.0" width="1.2" height="4.0" fill-opacity="0.55"/><rect x="545.4" y="870.2" width="1.2" height="21.8" fill-opacity="1.0"/><rect x="580.3" y="865.0" width="1.2" height="27.0" fill-opacity="1.0"/><rect x="582.1" y="866.5" width="1.2" height="25.5" fill-opacity="0.55"/><rect x="588.3" y="860.8" width="1.2" height="31.2" fill-opacity="1.0"/><rect x="589.4" y="865.0" width="1.2" height="27.0" fill-opacity="1.0"/><rect x="592.9" y="870.2" width="1.2" height="21.8" fill-opacity="0.55"/><rect x="596.3" y="889.0" width="1.2" height="3.0" fill-opacity="1.0"/><rect x="606.6" y="876.4" width="1.2" height="15.6" fill-opacity="1.0"/><rect x="609.4" y="847.3" width="1.2" height="44.7" fill-opacity="0.55"/><rect x="616.5" y="856.5" width="1.2" height="35.5" fill-opacity="1.0"/><rect x="618.1" y="868.0" width="1.2" height="24.0" fill-opacity="1.0"/><rect x="620.4" y="840.2" width="1.2" height="51.8" fill-opacity="0.55"/><rect x="622.7" y="851.9" width="1.2" height="40.1" fill-opacity="1.0"/><rect x="623.8" y="828.7" width="1.2" height="63.3" fill-opacity="1.0"/><rect x="632.6" y="836.3" width="1.2" height="55.7" fill-opacity="0.55"/><rect x="640.6" y="869.5" width="1.2" height="22.5" fill-opacity="1.0"/><rect x="643.6" y="853.0" width="1.2" height="39.0" fill-opacity="1.0"/><rect x="644.5" y="856.5" width="1.2" height="35.5" fill-opacity="0.55"/><rect x="647.5" y="851.9" width="1.2" height="40.1" fill-opacity="1.0"/><rect x="648.7" y="850.0" width="1.2" height="42.0" fill-opacity="1.0"/><rect x="649.4" y="816.8" width="1.2" height="75.2" fill-opacity="0.55"/><rect x="650.3" y="816.8" width="1.2" height="75.2" fill-opacity="1.0"/><rect x="651.0" y="868.4" width="1.2" height="23.6" fill-opacity="1.0"/><rect x="652.1" y="861.0" width="1.2" height="31.0" fill-opacity="0.55"/><rect x="657.8" y="856.5" width="1.2" height="35.5" fill-opacity="1.0"/><rect x="659.0" y="874.1" width="1.2" height="17.9" fill-opacity="1.0"/><rect x="665.9" y="885.6" width="1.2" height="6.4" fill-opacity="0.55"/><rect x="676.9" y="820.7" width="1.2" height="71.3" fill-opacity="1.0"/><rect x="681.9" y="885.6" width="1.2" height="6.4" fill-opacity="1.0"/><rect x="682.6" y="860.8" width="1.2" height="31.2" fill-opacity="0.55"/><rect x="683.7" y="874.1" width="1.2" height="17.9" fill-opacity="1.0"/><rect x="695.2" y="889.0" width="1.2" height="3.0" fill-opacity="1.0"/><rect x="699.1" y="882.6" width="1.2" height="9.4" fill-opacity="0.55"/><rect x="701.4" y="886.7" width="1.2" height="5.3" fill-opacity="1.0"/><rect x="706.0" y="889.0" width="1.2" height="3.0" fill-opacity="1.0"/><rect x="707.1" y="884.4" width="1.2" height="7.6" fill-opacity="0.55"/><rect x="710.6" y="862.6" width="1.2" height="29.4" fill-opacity="1.0"/><rect x="712.4" y="868.4" width="1.2" height="23.6" fill-opacity="1.0"/><rect x="714.5" y="824.1" width="1.2" height="67.9" fill-opacity="0.55"/><rect x="718.6" y="876.4" width="1.2" height="15.6" fill-opacity="1.0"/><rect x="720.2" y="873.0" width="1.2" height="19.0" fill-opacity="1.0"/><rect x="728.9" y="877.0" width="1.2" height="15.0" fill-opacity="0.55"/><rect x="732.4" y="876.4" width="1.2" height="15.6" fill-opacity="1.0"/><rect x="733.5" y="875.3" width="1.2" height="16.7" fill-opacity="1.0"/><rect x="737.4" y="818.0" width="1.2" height="74.0" fill-opacity="0.55"/><rect x="739.2" y="837.4" width="1.2" height="54.6" fill-opacity="1.0"/><rect x="741.5" y="867.9" width="1.2" height="24.1" fill-opacity="1.0"/><rect x="744.3" y="864.9" width="1.2" height="27.1" fill-opacity="0.55"/><rect x="747.3" y="864.9" width="1.2" height="27.1" fill-opacity="1.0"/><rect x="754.8" y="876.4" width="1.2" height="15.6" fill-opacity="1.0"/><rect x="755.3" y="837.9" width="1.2" height="54.1" fill-opacity="0.55"/><rect x="764.0" y="822.5" width="1.2" height="69.5" fill-opacity="1.0"/><rect x="764.5" y="820.7" width="1.2" height="71.3" fill-opacity="1.0"/><rect x="765.1" y="884.4" width="1.2" height="7.6" fill-opacity="0.55"/><rect x="769.0" y="884.4" width="1.2" height="7.6" fill-opacity="1.0"/><rect x="772.5" y="885.1" width="1.2" height="6.9" fill-opacity="1.0"/><rect x="775.9" y="889.0" width="1.2" height="3.0" fill-opacity="0.55"/><rect x="776.6" y="862.6" width="1.2" height="29.4" fill-opacity="1.0"/><rect x="779.4" y="828.2" width="1.2" height="63.8" fill-opacity="1.0"/><rect x="784.6" y="874.1" width="1.2" height="17.9" fill-opacity="0.55"/><rect x="785.6" y="870.7" width="1.2" height="21.3" fill-opacity="1.0"/><rect x="803.4" y="883.3" width="1.2" height="8.7" fill-opacity="1.0"/><rect x="804.6" y="879.8" width="1.2" height="12.2" fill-opacity="0.55"/><rect x="806.4" y="839.0" width="1.2" height="53.0" fill-opacity="1.0"/><rect x="808.5" y="828.2" width="1.2" height="63.8" fill-opacity="1.0"/><rect x="812.6" y="834.4" width="1.2" height="57.6" fill-opacity="0.55"/><rect x="822.2" y="880.3" width="1.2" height="11.7" fill-opacity="1.0"/><rect x="831.0" y="882.1" width="1.2" height="9.9" fill-opacity="1.0"/><rect x="840.6" y="860.8" width="1.2" height="31.2" fill-opacity="0.55"/><rect x="844.7" y="867.2" width="1.2" height="24.8" fill-opacity="1.0"/><rect x="849.3" y="882.1" width="1.2" height="9.9" fill-opacity="1.0"/><rect x="857.3" y="862.0" width="1.2" height="30.0" fill-opacity="0.55"/><rect x="858.9" y="859.9" width="1.2" height="32.1" fill-opacity="1.0"/><rect x="863.5" y="889.0" width="1.2" height="3.0" fill-opacity="1.0"/><rect x="867.2" y="879.8" width="1.2" height="12.2" fill-opacity="0.55"/><rect x="881.4" y="886.7" width="1.2" height="5.3" fill-opacity="1.0"/><rect x="894.7" y="882.1" width="1.2" height="9.9" fill-opacity="1.0"/><rect x="897.5" y="831.7" width="1.2" height="60.3" fill-opacity="0.55"/><rect x="900.2" y="837.0" width="1.2" height="55.0" fill-opacity="1.0"/><rect x="903.9" y="872.5" width="1.2" height="19.5" fill-opacity="1.0"/><rect x="905.5" y="858.0" width="1.2" height="34.0" fill-opacity="0.55"/><rect x="906.6" y="859.2" width="1.2" height="32.8" fill-opacity="1.0"/><rect x="910.1" y="859.9" width="1.2" height="32.1" fill-opacity="1.0"/><rect x="911.7" y="858.0" width="1.2" height="34.0" fill-opacity="0.55"/><rect x="913.0" y="846.6" width="1.2" height="45.4" fill-opacity="1.0"/><rect x="917.6" y="871.8" width="1.2" height="20.2" fill-opacity="1.0"/><rect x="919.2" y="848.9" width="1.2" height="43.1" fill-opacity="0.55"/><rect x="920.4" y="815.2" width="1.2" height="76.8" fill-opacity="1.0"/><rect x="922.7" y="833.5" width="1.2" height="58.5" fill-opacity="1.0"/><rect x="926.8" y="878.7" width="1.2" height="13.3" fill-opacity="0.55"/><rect x="466.6" y="916" width="1.2" height="15"/><rect x="467.8" y="921" width="1.2" height="10"/><rect x="360.6" y="929" width="1.2" height="2"/><rect x="478" y="929" width="1.2" height="2"/><rect x="596" y="929" width="1.2" height="2"/></g></svg>
<svg style="left:0;top:0" width="1352" height="931"><path d="M74.5 801 L74.5 892 M74.5 803.5 L80 803.5 M74.5 821 L80 821 M74.5 838.6 L80 838.6 M74.5 856.4 L80 856.4 M74.5 874.3 L80 874.3 M74.5 892 L80 892" stroke="#000" stroke-width="1.4" fill="none"/></svg>
<div class="t" style="left:82px;top:798.0px;font-size:10.5px;color:#222;text-shadow:0 0 2px #fff,0 0 2px #fff,0 0 1px #fff">1</div>
<div class="t" style="left:82px;top:815.5px;font-size:10.5px;color:#222;text-shadow:0 0 2px #fff,0 0 2px #fff,0 0 1px #fff">0.8</div>
<div class="t" style="left:82px;top:833.1px;font-size:10.5px;color:#222;text-shadow:0 0 2px #fff,0 0 2px #fff,0 0 1px #fff">0.6</div>
<div class="t" style="left:82px;top:850.9px;font-size:10.5px;color:#222;text-shadow:0 0 2px #fff,0 0 2px #fff,0 0 1px #fff">0.4</div>
<div class="t" style="left:82px;top:868.8px;font-size:10.5px;color:#222;text-shadow:0 0 2px #fff,0 0 2px #fff,0 0 1px #fff">0.2</div>
<div class="t" style="left:82px;top:886.5px;font-size:10.5px;color:#222;text-shadow:0 0 2px #fff,0 0 2px #fff,0 0 1px #fff">0</div>
<svg style="left:0;top:0" width="1352" height="931"><path d="M74.5 908 L74.5 999 M74.5 910.5 L80 910.5 M74.5 928 L80 928" stroke="#000" stroke-width="1.4" fill="none"/></svg>
<div class="t" style="left:82px;top:905.0px;font-size:10.5px;color:#222;text-shadow:0 0 2px #fff,0 0 2px #fff,0 0 1px #fff">1</div>
<div class="t" style="left:82px;top:922.5px;font-size:10.5px;color:#222;text-shadow:0 0 2px #fff,0 0 2px #fff,0 0 1px #fff">0.8</div>
<div class="a" style="left:25px;top:262.0px;width:184px;height:28px;border-radius:4px;background:rgba(255,255,255,0.82);box-shadow:0 1px 2px rgba(0,0,0,0.28)"></div>
<svg style="left:29.5px;top:270.0px" width="9" height="12"><g fill="#222"><circle cx="1.8" cy="2" r="1.35"/><circle cx="6.5" cy="2" r="1.35"/><circle cx="1.8" cy="6" r="1.35"/><circle cx="6.5" cy="6" r="1.35"/><circle cx="1.8" cy="10" r="1.35"/><circle cx="6.5" cy="10" r="1.35"/></g></svg>
<svg style="left:49px;top:271.0px" width="11" height="11"><path d="M0.5 0.5 L10 10 M10 0.5 L0.5 10" stroke="#666" stroke-width="1.3"/></svg>
<div class="t" style="left:67.5px;top:268.6px;font-size:12.2px;color:#333">NCBI RefSeq Genes</div>
<svg style="left:194px;top:271.0px" width="4" height="12"><g fill="#666"><circle cx="2" cy="1.6" r="1.5"/><circle cx="2" cy="5.6" r="1.5"/><circle cx="2" cy="9.6" r="1.5"/></g></svg>
<div class="a" style="left:25px;top:369.0px;width:208.5px;height:28px;border-radius:4px;background:rgba(255,255,255,0.82);box-shadow:0 1px 2px rgba(0,0,0,0.28)"></div>
<svg style="left:29.5px;top:377.0px" width="9" height="12"><g fill="#222"><circle cx="1.8" cy="2" r="1.35"/><circle cx="6.5" cy="2" r="1.35"/><circle cx="1.8" cy="6" r="1.35"/><circle cx="6.5" cy="6" r="1.35"/><circle cx="1.8" cy="10" r="1.35"/><circle cx="6.5" cy="10" r="1.35"/></g></svg>
<svg style="left:49px;top:378.0px" width="11" height="11"><path d="M0.5 0.5 L10 10 M10 0.5 L0.5 10" stroke="#666" stroke-width="1.3"/></svg>
<div class="t" style="left:67.5px;top:375.6px;font-size:13px;color:#333">32ibgw_pi_w10k_bigwig</div>
<svg style="left:218.5px;top:378.0px" width="4" height="12"><g fill="#666"><circle cx="2" cy="1.6" r="1.5"/><circle cx="2" cy="5.6" r="1.5"/><circle cx="2" cy="9.6" r="1.5"/></g></svg>
<div class="a" style="left:25px;top:476.0px;width:306px;height:28px;border-radius:4px;background:rgba(255,255,255,0.82);box-shadow:0 1px 2px rgba(0,0,0,0.28)"></div>
<svg style="left:29.5px;top:484.0px" width="9" height="12"><g fill="#222"><circle cx="1.8" cy="2" r="1.35"/><circle cx="6.5" cy="2" r="1.35"/><circle cx="1.8" cy="6" r="1.35"/><circle cx="6.5" cy="6" r="1.35"/><circle cx="1.8" cy="10" r="1.35"/><circle cx="6.5" cy="10" r="1.35"/></g></svg>
<svg style="left:49px;top:485.0px" width="11" height="11"><path d="M0.5 0.5 L10 10 M10 0.5 L0.5 10" stroke="#666" stroke-width="1.3"/></svg>
<div class="t" style="left:67.5px;top:482.6px;font-size:13px;color:#333">31dog_2badog_5medog_pi_w10k_bigwig</div>
<svg style="left:316px;top:485.0px" width="4" height="12"><g fill="#666"><circle cx="2" cy="1.6" r="1.5"/><circle cx="2" cy="5.6" r="1.5"/><circle cx="2" cy="9.6" r="1.5"/></g></svg>
<div class="a" style="left:25px;top:583.0px;width:225px;height:28px;border-radius:4px;background:rgba(255,255,255,0.82);box-shadow:0 1px 2px rgba(0,0,0,0.28)"></div>
<svg style="left:29.5px;top:591.0px" width="9" height="12"><g fill="#222"><circle cx="1.8" cy="2" r="1.35"/><circle cx="6.5" cy="2" r="1.35"/><circle cx="1.8" cy="6" r="1.35"/><circle cx="6.5" cy="6" r="1.35"/><circle cx="1.8" cy="10" r="1.35"/><circle cx="6.5" cy="10" r="1.35"/></g></svg>
<svg style="left:49px;top:592.0px" width="11" height="11"><path d="M0.5 0.5 L10 10 M10 0.5 L0.5 10" stroke="#666" stroke-width="1.3"/></svg>
<div class="t" style="left:67.5px;top:589.6px;font-size:13px;color:#333">32ibgw_fuliD_w10k_bigwig</div>
<svg style="left:235px;top:592.0px" width="4" height="12"><g fill="#666"><circle cx="2" cy="1.6" r="1.5"/><circle cx="2" cy="5.6" r="1.5"/><circle cx="2" cy="9.6" r="1.5"/></g></svg>
<div class="a" style="left:25px;top:690.0px;width:242px;height:28px;border-radius:4px;background:rgba(255,255,255,0.82);box-shadow:0 1px 2px rgba(0,0,0,0.28)"></div>
<svg style="left:29.5px;top:698.0px" width="9" height="12"><g fill="#222"><circle cx="1.8" cy="2" r="1.35"/><circle cx="6.5" cy="2" r="1.35"/><circle cx="1.8" cy="6" r="1.35"/><circle cx="6.5" cy="6" r="1.35"/><circle cx="1.8" cy="10" r="1.35"/><circle cx="6.5" cy="10" r="1.35"/></g></svg>
<svg style="left:49px;top:699.0px" width="11" height="11"><path d="M0.5 0.5 L10 10 M10 0.5 L0.5 10" stroke="#666" stroke-width="1.3"/></svg>
<div class="t" style="left:67.5px;top:696.6px;font-size:13px;color:#333">32ibgw_tajimaD_w10k_bigwig</div>
<svg style="left:252px;top:699.0px" width="4" height="12"><g fill="#666"><circle cx="2" cy="1.6" r="1.5"/><circle cx="2" cy="5.6" r="1.5"/><circle cx="2" cy="9.6" r="1.5"/></g></svg>
<div class="a" style="left:25px;top:797.0px;width:264px;height:28px;border-radius:4px;background:rgba(255,255,255,0.82);box-shadow:0 1px 2px rgba(0,0,0,0.28)"></div>
<svg style="left:29.5px;top:805.0px" width="9" height="12"><g fill="#222"><circle cx="1.8" cy="2" r="1.35"/><circle cx="6.5" cy="2" r="1.35"/><circle cx="1.8" cy="6" r="1.35"/><circle cx="6.5" cy="6" r="1.35"/><circle cx="1.8" cy="10" r="1.35"/><circle cx="6.5" cy="10" r="1.35"/></g></svg>
<svg style="left:49px;top:806.0px" width="11" height="11"><path d="M0.5 0.5 L10 10 M10 0.5 L0.5 10" stroke="#666" stroke-width="1.3"/></svg>
<div class="t" style="left:67.5px;top:803.6px;font-size:13px;color:#333">32ibgw_14itgw_hudsonfst_bigwig</div>
<svg style="left:274px;top:806.0px" width="4" height="12"><g fill="#666"><circle cx="2" cy="1.6" r="1.5"/><circle cx="2" cy="5.6" r="1.5"/><circle cx="2" cy="9.6" r="1.5"/></g></svg>
<div class="a" style="left:25px;top:904.0px;width:271px;height:28px;border-radius:4px;background:rgba(255,255,255,0.82);box-shadow:0 1px 2px rgba(0,0,0,0.28)"></div>
<svg style="left:29.5px;top:912.0px" width="9" height="12"><g fill="#222"><circle cx="1.8" cy="2" r="1.35"/><circle cx="6.5" cy="2" r="1.35"/><circle cx="1.8" cy="6" r="1.35"/><circle cx="6.5" cy="6" r="1.35"/><circle cx="1.8" cy="10" r="1.35"/><circle cx="6.5" cy="10" r="1.35"/></g></svg>
<svg style="left:49px;top:913.0px" width="11" height="11"><path d="M0.5 0.5 L10 10 M10 0.5 L0.5 10" stroke="#666" stroke-width="1.3"/></svg>
<div class="t" style="left:67.5px;top:910.6px;font-size:13px;color:#333">32ibgw_16bagw_hudsonfst_bigwig</div>
<svg style="left:281px;top:913.0px" width="4" height="12"><g fill="#666"><circle cx="2" cy="1.6" r="1.5"/><circle cx="2" cy="5.6" r="1.5"/><circle cx="2" cy="9.6" r="1.5"/></g></svg>
<div class="a" style="left:932px;top:146px;width:17px;height:785px;background:#e9e9e9"></div>
<div class="a" style="left:934px;top:146px;width:15px;height:785px;background:#f1f1f1"></div>
<svg style="left:936px;top:148px" width="11" height="9"><path d="M0.5 8 L5.5 1 L10.5 8Z" fill="#8a8a8a"/></svg>
<div class="a" style="left:937px;top:162px;width:9px;height:518px;border-radius:4.5px;background:#7b7b7b"></div>
<div class="a" style="left:1333px;top:96px;width:19px;height:835px;background:linear-gradient(90deg,rgba(0,0,0,0.16),rgba(0,0,0,0.06) 40%,rgba(0,0,0,0) 100%)"></div>
<div class="a" style="left:949px;top:143.5px;width:384px;height:788px;background:#fff"></div>
<div class="a" style="left:949px;top:96px;width:384px;height:47.5px;background:#721e63;box-shadow:0 2px 4px rgba(0,0,0,0.25)"></div>
<div class="a" style="left:949.5px;top:98px;width:167px;height:44.5px;border:1px solid #58124c;border-radius:4px"></div>
<div class="t" style="left:963px;top:111.5px;font-size:16.3px;color:#fff;letter-spacing:0.55px;-webkit-text-stroke:0.35px #fff">Available tracks</div>
<svg style="left:1094.5px;top:117.5px" width="10" height="6"><path d="M0 0.5 L9.5 0.5 L4.75 5.5Z" fill="#fff"/></svg>
<svg style="left:1124px;top:111.5px" width="17" height="17"><path d="M7 1.2 L1.2 1.2 L1.2 15.8 L15.8 15.8 L15.8 10" stroke="#fff" stroke-width="1.9" fill="none"/><path d="M10 1 L16 1 L16 7 M16 1 L8 9" stroke="#fff" stroke-width="1.9" fill="none"/></svg>
<svg style="left:1254px;top:113px" width="5" height="15"><g fill="#fff"><circle cx="2.4" cy="2" r="1.8"/><circle cx="2.4" cy="7" r="1.8"/><circle cx="2.4" cy="12" r="1.8"/></g></svg>
<div class="a" style="left:1282px;top:125.5px;width:11px;height:2.2px;background:#fff"></div>
<svg style="left:1311px;top:114px" width="13" height="13"><path d="M0.8 0.8 L12 12 M12 0.8 L0.8 12" stroke="#fff" stroke-width="1.7"/></svg>
<svg style="left:956px;top:168px" width="17" height="13"><g fill="#777"><rect x="0" y="1" width="16" height="1.7"/><rect x="0" y="5.3" width="16" height="1.7"/><rect x="0" y="9.6" width="16" height="1.7"/></g></svg>
<div class="t" style="left:988px;top:171.2px;font-size:14px;color:#777">Filter tracks</div>
<div class="a" style="left:988px;top:194.5px;width:266px;height:1px;background:#8f8f8f"></div>
<svg style="left:1232.5px;top:176px" width="12" height="12"><path d="M0.8 0.8 L11 11 M11 0.8 L0.8 11" stroke="#666" stroke-width="1.6"/></svg>
<svg style="left:1267px;top:165px" width="20" height="18" viewBox="0 0 20 18"><path d="M4 9 A7 7 0 1 1 6 14" stroke="#777" stroke-width="1.7" fill="none"/><path d="M0.5 8.5 L4 12.5 L7.5 8.5Z" fill="#777"/><path d="M11 5 L11 9.5 L14 11.5" stroke="#777" stroke-width="1.5" fill="none"/></svg>
<div class="a" style="left:1276px;top:177px;width:23px;height:14px;border-radius:7px;background:#721e63"></div>
<div class="t" style="left:1276px;top:179.5px;width:23px;text-align:center;font-size:10px;font-weight:700;color:#fff">10</div>
<svg style="left:1297.5px;top:163.5px" width="20" height="20" viewBox="0 0 24 24"><path d="M12 17.27L18.18 21l-1.64-7.03L22 9.24l-7.19-.61L12 2 9.19 8.63 2 9.24l5.46 4.73L5.82 21z" fill="#777"/></svg>
<svg style="left:1320px;top:208px" width="11" height="8"><path d="M0.5 7.5 L5.5 1 L10.5 7.5Z" fill="#8a8a8a"/></svg>
<div class="a" style="left:1321px;top:222px;width:9px;height:720px;border-radius:4.5px;background:#8a8a8a"></div>
<div class="a" style="left:0;top:0;width:1352px;height:931px;clip-path:inset(200px 36px 0 949px)">
<div class="a" style="left:952px;top:207px;width:363px;height:33.7px;background:#b083a7"></div><svg style="left:962.5px;top:222px" width="10" height="6"><path d="M0 0.5 L9 0.5 L4.5 5Z" fill="#fff"/></svg><div class="t" style="left:977.5px;top:216px;font-size:14px;font-weight:400;color:#fff;-webkit-text-stroke:0.25px #fff">Tracks <svg width="15" height="4" style="position:static;display:inline-block;margin-left:3.5px;vertical-align:2.4px"><g fill="#fff"><circle cx="1.8" cy="2" r="1.75"/><circle cx="7.5" cy="2" r="1.75"/><circle cx="13.2" cy="2" r="1.75"/></g></svg></div>
<div class="a" style="left:953px;top:244.5px;width:1px;height:700px;background:#333"></div>
<div class="a" style="left:961px;top:246.5px;width:15px;height:15px;border-radius:2px;border:2px solid #6b6b6b"></div><div class="t" style="left:979.3px;top:247.2px;font-size:13.7px;color:#222">Reference sequence (Canis lupus spp. (CanFam3.1))<svg width="15" height="4" style="position:static;display:inline-block;margin-left:3.5px;vertical-align:-0.5px"><g fill="#777"><circle cx="1.8" cy="2" r="1.6"/><circle cx="6.8" cy="2" r="1.6"/><circle cx="11.8" cy="2" r="1.6"/></g></svg></div>
<div class="a" style="left:962px;top:269px;width:353px;height:33.7px;background:#b083a7"></div><svg style="left:972.5px;top:284px" width="10" height="6"><path d="M0 0.5 L9 0.5 L4.5 5Z" fill="#fff"/></svg><div class="t" style="left:987.5px;top:278px;font-size:14px;font-weight:400;color:#fff;-webkit-text-stroke:0.25px #fff">Reference annotations <svg width="15" height="4" style="position:static;display:inline-block;margin-left:3.5px;vertical-align:2.4px"><g fill="#fff"><circle cx="1.8" cy="2" r="1.75"/><circle cx="7.5" cy="2" r="1.75"/><circle cx="13.2" cy="2" r="1.75"/></g></svg></div>
<div class="a" style="left:963px;top:305.5px;width:1px;height:175px;background:#333"></div>
<div class="a" style="left:971px;top:309px;width:15px;height:15px;border-radius:2px;border:2px solid #6b6b6b"></div><div class="t" style="left:989.3px;top:309.7px;font-size:13.7px;color:#222">ENSEMBL Genes<svg width="15" height="4" style="position:static;display:inline-block;margin-left:3.5px;vertical-align:-0.5px"><g fill="#777"><circle cx="1.8" cy="2" r="1.6"/><circle cx="6.8" cy="2" r="1.6"/><circle cx="11.8" cy="2" r="1.6"/></g></svg></div>
<div class="a" style="left:971px;top:331px;width:15px;height:15px;border-radius:2px;background:#0f223f"></div><svg style="left:971px;top:331px" width="15" height="15"><path d="M3 7.5 L6.2 10.7 L12.2 4.4" stroke="#fff" stroke-width="1.7" fill="none"/></svg><div class="t" style="left:989.3px;top:331.7px;font-size:13.7px;color:#222">NCBI RefSeq Genes<svg width="15" height="4" style="position:static;display:inline-block;margin-left:3.5px;vertical-align:-0.5px"><g fill="#777"><circle cx="1.8" cy="2" r="1.6"/><circle cx="6.8" cy="2" r="1.6"/><circle cx="11.8" cy="2" r="1.6"/></g></svg></div>
<div class="a" style="left:971px;top:353px;width:15px;height:15px;border-radius:2px;border:2px solid #6b6b6b"></div><div class="t" style="left:989.3px;top:353.7px;font-size:13.7px;color:#222">Reference Genes<svg width="15" height="4" style="position:static;display:inline-block;margin-left:3.5px;vertical-align:-0.5px"><g fill="#777"><circle cx="1.8" cy="2" r="1.6"/><circle cx="6.8" cy="2" r="1.6"/><circle cx="11.8" cy="2" r="1.6"/></g></svg></div>
<div class="a" style="left:971px;top:375px;width:15px;height:15px;border-radius:2px;border:2px solid #6b6b6b"></div><div class="t" style="left:989.3px;top:375.7px;font-size:13.7px;color:#222">CpG Islands<svg width="15" height="4" style="position:static;display:inline-block;margin-left:3.5px;vertical-align:-0.5px"><g fill="#777"><circle cx="1.8" cy="2" r="1.6"/><circle cx="6.8" cy="2" r="1.6"/><circle cx="11.8" cy="2" r="1.6"/></g></svg></div>
<div class="a" style="left:971px;top:397px;width:15px;height:15px;border-radius:2px;border:2px solid #6b6b6b"></div><div class="t" style="left:989.3px;top:397.7px;font-size:13.7px;color:#222">TSS Peaks<svg width="15" height="4" style="position:static;display:inline-block;margin-left:3.5px;vertical-align:-0.5px"><g fill="#777"><circle cx="1.8" cy="2" r="1.6"/><circle cx="6.8" cy="2" r="1.6"/><circle cx="11.8" cy="2" r="1.6"/></g></svg></div>
<div class="a" style="left:971px;top:419px;width:15px;height:15px;border-radius:2px;border:2px solid #6b6b6b"></div><div class="t" style="left:989.3px;top:419.7px;font-size:13.7px;color:#222">ORegAnno Regulatory Elements<svg width="15" height="4" style="position:static;display:inline-block;margin-left:3.5px;vertical-align:-0.5px"><g fill="#777"><circle cx="1.8" cy="2" r="1.6"/><circle cx="6.8" cy="2" r="1.6"/><circle cx="11.8" cy="2" r="1.6"/></g></svg></div>
<div class="a" style="left:971px;top:441px;width:15px;height:15px;border-radius:2px;border:2px solid #6b6b6b"></div><div class="t" style="left:989.3px;top:441.7px;font-size:13.7px;color:#222">Tandem Repeats Finder locations<svg width="15" height="4" style="position:static;display:inline-block;margin-left:3.5px;vertical-align:-0.5px"><g fill="#777"><circle cx="1.8" cy="2" r="1.6"/><circle cx="6.8" cy="2" r="1.6"/><circle cx="11.8" cy="2" r="1.6"/></g></svg></div>
<div class="a" style="left:971px;top:463px;width:15px;height:15px;border-radius:2px;border:2px solid #6b6b6b"></div><div class="t" style="left:989.3px;top:463.7px;font-size:13.7px;color:#222">Gaps<svg width="15" height="4" style="position:static;display:inline-block;margin-left:3.5px;vertical-align:-0.5px"><g fill="#777"><circle cx="1.8" cy="2" r="1.6"/><circle cx="6.8" cy="2" r="1.6"/><circle cx="11.8" cy="2" r="1.6"/></g></svg></div>
<div class="a" style="left:962px;top:485px;width:353px;height:33.7px;background:#b083a7"></div><svg style="left:974.5px;top:497.5px" width="6" height="10"><path d="M0.5 0 L5 4.5 L0.5 9Z" fill="#fff"/></svg><div class="t" style="left:987.5px;top:494px;font-size:14px;font-weight:400;color:#fff;-webkit-text-stroke:0.25px #fff">Frequency-based nucleotide variation <svg width="15" height="4" style="position:static;display:inline-block;margin-left:3.5px;vertical-align:2.4px"><g fill="#fff"><circle cx="1.8" cy="2" r="1.75"/><circle cx="7.5" cy="2" r="1.75"/><circle cx="13.2" cy="2" r="1.75"/></g></svg></div>
<div class="a" style="left:962px;top:525px;width:353px;height:33.7px;background:#b083a7"></div><svg style="left:974.5px;top:537.5px" width="6" height="10"><path d="M0.5 0 L5 4.5 L0.5 9Z" fill="#fff"/></svg><div class="t" style="left:987.5px;top:534px;font-size:14px;font-weight:400;color:#fff;-webkit-text-stroke:0.25px #fff">Selection tests based on SFS <svg width="15" height="4" style="position:static;display:inline-block;margin-left:3.5px;vertical-align:2.4px"><g fill="#fff"><circle cx="1.8" cy="2" r="1.75"/><circle cx="7.5" cy="2" r="1.75"/><circle cx="13.2" cy="2" r="1.75"/></g></svg></div>
<div class="a" style="left:962px;top:565px;width:353px;height:33.7px;background:#b083a7"></div><svg style="left:972.5px;top:580px" width="10" height="6"><path d="M0 0.5 L9 0.5 L4.5 5Z" fill="#fff"/></svg><div class="t" style="left:987.5px;top:574px;font-size:14px;font-weight:400;color:#fff;-webkit-text-stroke:0.25px #fff">Selection tests based on LD <svg width="15" height="4" style="position:static;display:inline-block;margin-left:3.5px;vertical-align:2.4px"><g fill="#fff"><circle cx="1.8" cy="2" r="1.75"/><circle cx="7.5" cy="2" r="1.75"/><circle cx="13.2" cy="2" r="1.75"/></g></svg></div>
<div class="a" style="left:963px;top:602px;width:1px;height:340px;background:#333"></div>
<div class="a" style="left:972px;top:605px;width:343px;height:33.7px;background:#b083a7"></div><svg style="left:982.5px;top:620px" width="10" height="6"><path d="M0 0.5 L9 0.5 L4.5 5Z" fill="#fff"/></svg><div class="t" style="left:997.5px;top:614px;font-size:14px;font-weight:400;color:#fff;-webkit-text-stroke:0.25px #fff">XP-EHH <svg width="15" height="4" style="position:static;display:inline-block;margin-left:3.5px;vertical-align:2.4px"><g fill="#fff"><circle cx="1.8" cy="2" r="1.75"/><circle cx="7.5" cy="2" r="1.75"/><circle cx="13.2" cy="2" r="1.75"/></g></svg></div>
<div class="a" style="left:973px;top:642px;width:1px;height:198px;background:#333"></div>
<div class="a" style="left:980.5px;top:645.4px;width:15px;height:15px;border-radius:2px;border:2px solid #6b6b6b"></div><div class="t" style="left:998.8px;top:646.1px;font-size:13.7px;color:#222">31dog_2badog_5medog_16bagw_xpehh_bigwig<svg width="15" height="4" style="position:static;display:inline-block;margin-left:3.5px;vertical-align:-0.5px"><g fill="#777"><circle cx="1.8" cy="2" r="1.6"/><circle cx="6.8" cy="2" r="1.6"/><circle cx="11.8" cy="2" r="1.6"/></g></svg></div>
<div class="a" style="left:980.5px;top:667.4px;width:15px;height:15px;border-radius:2px;border:2px solid #6b6b6b"></div><div class="t" style="left:998.8px;top:668.1px;font-size:13.7px;color:#222">31dog_2badog_5medog_32ibgw_xpehh_bigwig<svg width="15" height="4" style="position:static;display:inline-block;margin-left:3.5px;vertical-align:-0.5px"><g fill="#777"><circle cx="1.8" cy="2" r="1.6"/><circle cx="6.8" cy="2" r="1.6"/><circle cx="11.8" cy="2" r="1.6"/></g></svg></div>
<div class="a" style="left:980.5px;top:689.4px;width:15px;height:15px;border-radius:2px;border:2px solid #6b6b6b"></div><div class="t" style="left:998.8px;top:690.1px;font-size:13.7px;color:#222">14itgw_16bagw_xpehh_bigwig<svg width="15" height="4" style="position:static;display:inline-block;margin-left:3.5px;vertical-align:-0.5px"><g fill="#777"><circle cx="1.8" cy="2" r="1.6"/><circle cx="6.8" cy="2" r="1.6"/><circle cx="11.8" cy="2" r="1.6"/></g></svg></div>
<div class="a" style="left:980.5px;top:711.4px;width:15px;height:15px;border-radius:2px;border:2px solid #6b6b6b"></div><div class="t" style="left:998.8px;top:712.1px;font-size:13.7px;color:#222">24negw_14itgw_xpehh_bigwig<svg width="15" height="4" style="position:static;display:inline-block;margin-left:3.5px;vertical-align:-0.5px"><g fill="#777"><circle cx="1.8" cy="2" r="1.6"/><circle cx="6.8" cy="2" r="1.6"/><circle cx="11.8" cy="2" r="1.6"/></g></svg></div>
<div class="a" style="left:980.5px;top:733.4px;width:15px;height:15px;border-radius:2px;border:2px solid #6b6b6b"></div><div class="t" style="left:998.8px;top:734.1px;font-size:13.7px;color:#222">24negw_31dog_2badog_5medog_xpehh_bigwig<svg width="15" height="4" style="position:static;display:inline-block;margin-left:3.5px;vertical-align:-0.5px"><g fill="#777"><circle cx="1.8" cy="2" r="1.6"/><circle cx="6.8" cy="2" r="1.6"/><circle cx="11.8" cy="2" r="1.6"/></g></svg></div>
<div class="a" style="left:980.5px;top:755.4px;width:15px;height:15px;border-radius:2px;border:2px solid #6b6b6b"></div><div class="t" style="left:998.8px;top:756.1px;font-size:13.7px;color:#222">24negw_32ibgw_xpehh_bigwig<svg width="15" height="4" style="position:static;display:inline-block;margin-left:3.5px;vertical-align:-0.5px"><g fill="#777"><circle cx="1.8" cy="2" r="1.6"/><circle cx="6.8" cy="2" r="1.6"/><circle cx="11.8" cy="2" r="1.6"/></g></svg></div>
<div class="a" style="left:980.5px;top:777.4px;width:15px;height:15px;border-radius:2px;background:#0f223f"></div><svg style="left:980.5px;top:777.4px" width="15" height="15"><path d="M3 7.5 L6.2 10.7 L12.2 4.4" stroke="#fff" stroke-width="1.7" fill="none"/></svg><div class="t" style="left:998.8px;top:778.1px;font-size:13.7px;color:#222">32ibgw_16bagw_xpehh_bigwig<svg width="15" height="4" style="position:static;display:inline-block;margin-left:3.5px;vertical-align:-0.5px"><g fill="#777"><circle cx="1.8" cy="2" r="1.6"/><circle cx="6.8" cy="2" r="1.6"/><circle cx="11.8" cy="2" r="1.6"/></g></svg></div>
<div class="a" style="left:980.5px;top:799.4px;width:15px;height:15px;border-radius:2px;border:2px solid #6b6b6b"></div><div class="t" style="left:998.8px;top:800.1px;font-size:13.7px;color:#222">24negw_16bagw_xpehh_bigwig<svg width="15" height="4" style="position:static;display:inline-block;margin-left:3.5px;vertical-align:-0.5px"><g fill="#777"><circle cx="1.8" cy="2" r="1.6"/><circle cx="6.8" cy="2" r="1.6"/><circle cx="11.8" cy="2" r="1.6"/></g></svg></div>
<div class="a" style="left:980.5px;top:821.4px;width:15px;height:15px;border-radius:2px;border:2px solid #6b6b6b"></div><div class="t" style="left:998.8px;top:822.1px;font-size:13.7px;color:#222">31dog_2badog_5medog_14itgw_xpehh_bigwig<svg width="15" height="4" style="position:static;display:inline-block;margin-left:3.5px;vertical-align:-0.5px"><g fill="#777"><circle cx="1.8" cy="2" r="1.6"/><circle cx="6.8" cy="2" r="1.6"/><circle cx="11.8" cy="2" r="1.6"/></g></svg></div>
<div class="a" style="left:972px;top:843px;width:343px;height:33.7px;background:#b083a7"></div><svg style="left:982.5px;top:858px" width="10" height="6"><path d="M0 0.5 L9 0.5 L4.5 5Z" fill="#fff"/></svg><div class="t" style="left:997.5px;top:852px;font-size:14px;font-weight:400;color:#fff;-webkit-text-stroke:0.25px #fff">XP-nSL <svg width="15" height="4" style="position:static;display:inline-block;margin-left:3.5px;vertical-align:2.4px"><g fill="#fff"><circle cx="1.8" cy="2" r="1.75"/><circle cx="7.5" cy="2" r="1.75"/><circle cx="13.2" cy="2" r="1.75"/></g></svg></div>
<div class="a" style="left:973px;top:880px;width:1px;height:60px;background:#333"></div>
<div class="a" style="left:980.5px;top:882.8px;width:15px;height:15px;border-radius:2px;background:#0f223f"></div><svg style="left:980.5px;top:882.8px" width="15" height="15"><path d="M3 7.5 L6.2 10.7 L12.2 4.4" stroke="#fff" stroke-width="1.7" fill="none"/></svg><div class="t" style="left:998.8px;top:883.5px;font-size:13.7px;color:#222">32ibgw_16bagw_xpnsl_bigwig<svg width="15" height="4" style="position:static;display:inline-block;margin-left:3.5px;vertical-align:-0.5px"><g fill="#777"><circle cx="1.8" cy="2" r="1.6"/><circle cx="6.8" cy="2" r="1.6"/><circle cx="11.8" cy="2" r="1.6"/></g></svg></div>
<div class="a" style="left:980.5px;top:904.8px;width:15px;height:15px;border-radius:2px;border:2px solid #6b6b6b"></div><div class="t" style="left:998.8px;top:905.5px;font-size:13.7px;color:#222">24negw_31dog_2badog_5medog_xpnsl_bigwig<svg width="15" height="4" style="position:static;display:inline-block;margin-left:3.5px;vertical-align:-0.5px"><g fill="#777"><circle cx="1.8" cy="2" r="1.6"/><circle cx="6.8" cy="2" r="1.6"/><circle cx="11.8" cy="2" r="1.6"/></g></svg></div>
<div class="a" style="left:980.5px;top:926.8px;width:15px;height:15px;border-radius:2px;border:2px solid #6b6b6b"></div><div class="t" style="left:998.8px;top:927.5px;font-size:13.7px;color:#222">24negw_16bagw_xpnsl_bigwig<svg width="15" height="4" style="position:static;display:inline-block;margin-left:3.5px;vertical-align:-0.5px"><g fill="#777"><circle cx="1.8" cy="2" r="1.6"/><circle cx="6.8" cy="2" r="1.6"/><circle cx="11.8" cy="2" r="1.6"/></g></svg></div>
</div>
</body></html>
